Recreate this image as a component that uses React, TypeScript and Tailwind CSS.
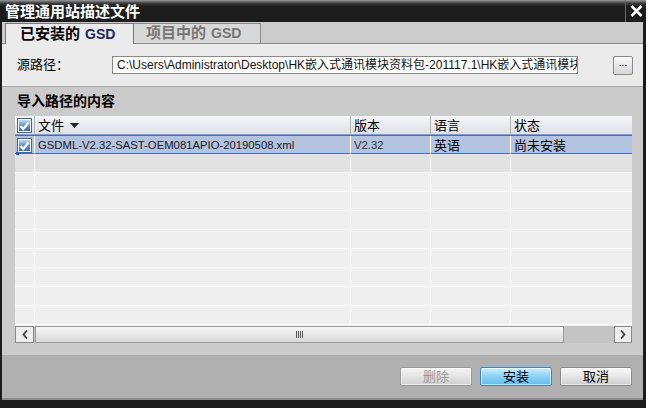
import React from "react";

const cols = "grid grid-cols-[20px_316px_80px_80px_1fr]";

function Check() {
  return (
    <span className="flex h-[15px] w-[15px] items-center justify-center border border-[#4d6688] bg-[linear-gradient(#d9e8fb,#6f9edc_40%,#2f62b8)] shadow-[inset_0_0_0_1px_#f4f8ff]">
      <svg width="11" height="10" viewBox="0 0 11 10">
        <path d="M1.5 5 L4.3 8 L9.5 1.5" stroke="#ffffff" strokeWidth="2.2" fill="none" />
      </svg>
    </span>
  );
}

function Btn({ label, kind }: { label: string; kind?: "primary" | "disabled" }) {
  const look =
    kind === "primary"
      ? "border-[#3f86bf] bg-[linear-gradient(#d4effc,#8fd3f4_45%,#62bdeb)] text-black"
      : kind === "disabled"
      ? "border-[#9a9a9a] bg-[linear-gradient(#f6f6f6,#e3e3e3_50%,#cfcfcf)] text-[#9a9a9a]"
      : "border-[#8a8a8a] bg-[linear-gradient(#fafafa,#e6e6e6_50%,#cbcbcb)] text-black";
  return (
    <div className={`flex h-[19px] w-[72px] items-center justify-center rounded-[2px] border text-[13px] shadow-[inset_0_0_0_1px_rgba(255,255,255,0.6)] ${look}`}>
      {label}
    </div>
  );
}

export default function App() {
  const rows = Array.from({ length: 10 });
  return (
    <div className="flex h-[408px] w-[646px] flex-col overflow-hidden bg-[#1c1c1c] font-['Liberation_Sans','Noto_Sans_CJK_SC',sans-serif] text-black">
      {/* title bar */}
      <div className="flex h-[22px] shrink-0 items-center justify-between bg-[linear-gradient(#9a9a9a,#3a3a3a_15%,#1c1c1c_30%)]">
        <span className="pl-[5px] text-[15px] font-bold leading-none text-white">管理通用站描述文件</span>
        <div className="flex h-full w-[21px] items-center justify-center border-l border-[#6a6a6a]">
          <svg width="13" height="12" viewBox="0 0 13 12">
            <path d="M1.5 1 L11.5 11 M11.5 1 L1.5 11" stroke="#ffffff" strokeWidth="2.6" />
          </svg>
        </div>
      </div>

      <div className="ml-[2px] mr-[3px] flex flex-1 flex-col">
        {/* tabs */}
        <div className="flex h-[22px] shrink-0 items-end border-b border-[#8a8a8a] bg-[#cccccc] pl-[3px]">
          <div className="-mb-px flex h-[21px] w-[129px] items-center border-x border-t border-[#7a7a7a] bg-[#ebebeb] pl-[14px] text-[15px] font-bold">
            已安装的<span className="ml-[5px] text-[14px] text-[#1b2660]">GSD</span>
          </div>
          <div className="flex h-[20px] w-[127px] items-center border-r border-t border-[#8a8a8a] bg-[#d8d8d8] pl-[12px] text-[15px] font-bold text-[#767676]">
            项目中的<span className="ml-[5px] text-[14px]">GSD</span>
          </div>
        </div>

        {/* source path */}
        <div className="flex h-[42px] shrink-0 items-center bg-[#ebebeb] pl-[15px] pr-[10px]">
          <span className="w-[95px] text-[13px]">源路径：</span>
          <div className="flex h-[18px] w-[466px] items-center overflow-hidden whitespace-nowrap border border-[#8a8a8a] bg-white pl-[4px] text-[12px] text-[#111]">
            C:\Users\Administrator\Desktop\HK嵌入式通讯模块资料包-201117.1\HK嵌入式通讯模块
          </div>
          <div className="ml-auto flex h-[19px] w-[20px] items-center justify-center rounded-[2px] border border-[#8a8a8a] bg-[linear-gradient(#fafafa,#d6d6d6)] pb-[4px] text-[10px] leading-none">
            ...
          </div>
        </div>
        <div className="h-px shrink-0 bg-[#a8a8a8]" />

        {/* content section */}
        <div className="flex h-[268px] shrink-0 flex-col bg-[#cbcbcb] pl-[13px] pr-[11px]">
          <div className="flex h-[29px] shrink-0 items-center pl-[2px] text-[14px] font-bold">导入路径的内容</div>

          <div className="relative flex h-[227px] flex-col bg-[#efefef]">
            {/* header */}
            <div className={`${cols} h-[19px] shrink-0 border-b border-[#9c9c9c] bg-[linear-gradient(#f5f6f8,#dde0e6)] text-[13px]`}>
              <div className="flex items-center justify-center border-r border-[#b4b4b4]">
                <Check />
              </div>
              <div className="flex items-center gap-[6px] border-r border-[#b4b4b4] pl-[3px]">
                文件
                <svg width="9" height="5" viewBox="0 0 9 5">
                  <path d="M0 0 H9 L4.5 5 Z" fill="#222" />
                </svg>
              </div>
              <div className="flex items-center border-r border-[#b4b4b4] pl-[3px]">版本</div>
              <div className="flex items-center border-r border-[#b4b4b4] pl-[3px]">语言</div>
              <div className="flex items-center pl-[3px]">状态</div>
            </div>

            {/* selected row */}
            <div className={`${cols} h-[19px] shrink-0 border-y border-[#3b6cd0] bg-[#b3c3e0] text-[13px]`}>
              <div className="flex items-center justify-center border-r border-white">
                <Check />
              </div>
              <div className="flex items-center border-r border-white pl-[3px] text-[11.3px] text-[#1a1a1a]">
                GSDML-V2.32-SAST-OEM081APIO-20190508.xml
              </div>
              <div className="flex items-center border-r border-white pl-[3px] text-[11.3px] text-[#333]">V2.32</div>
              <div className="flex items-center border-r border-white pl-[3px]">英语</div>
              <div className="flex items-center pl-[3px]">尚未安装</div>
            </div>
            <div className="absolute left-[1px] top-[36px] h-[3px] w-[3px] bg-[#2a5fd0]" />

            {/* empty rows */}
            <div className="flex-1 overflow-hidden">
              {rows.map((_, i) => (
                <div key={i} className={`${cols} h-[19px] border-b border-white ${i === 0 ? "bg-[#e1e1e1]" : "bg-[#efefef]"}`}>
                  <div className="border-r border-white" />
                  <div className="border-r border-white" />
                  <div className="border-r border-white" />
                  <div className="border-r border-white" />
                  <div />
                </div>
              ))}
            </div>

            {/* horizontal scrollbar */}
            <div className="flex h-[17px] shrink-0 bg-[#c4c4c4]">
              <div className="flex w-[19px] items-center justify-center border border-[#8a8a8a] bg-[#ededed]">
                <svg width="6" height="9" viewBox="0 0 6 9">
                  <path d="M5 0.5 L1.5 4.5 L5 8.5" stroke="#444" strokeWidth="1.8" fill="none" />
                </svg>
              </div>
              <div className="ml-px flex w-[529px] items-center justify-center border border-[#9a9a9a] bg-[linear-gradient(#f6f6f6,#d9d9d9)]">
                <span className="h-[7px] w-px bg-[#555]" />
                <span className="ml-px h-[7px] w-px bg-[#555]" />
                <span className="ml-px h-[7px] w-px bg-[#555]" />
                <span className="ml-px h-[7px] w-px bg-[#555]" />
              </div>
              <div className="ml-auto flex w-[18px] items-center justify-center border border-[#8a8a8a] bg-[#ededed]">
                <svg width="6" height="9" viewBox="0 0 6 9">
                  <path d="M1 0.5 L4.5 4.5 L1 8.5" stroke="#444" strokeWidth="1.8" fill="none" />
                </svg>
              </div>
            </div>
          </div>
        </div>

        {/* footer */}
        <div className="flex h-[43px] shrink-0 items-start justify-end gap-[8px] bg-[#b0b0b0] pr-[11px] pt-[12px]">
          <Btn label="删除" kind="disabled" />
          <Btn label="安装" kind="primary" />
          <Btn label="取消" />
        </div>
        <div className="h-[2px] shrink-0 bg-[#8c8c8c]" />
      </div>
    </div>
  );
}
